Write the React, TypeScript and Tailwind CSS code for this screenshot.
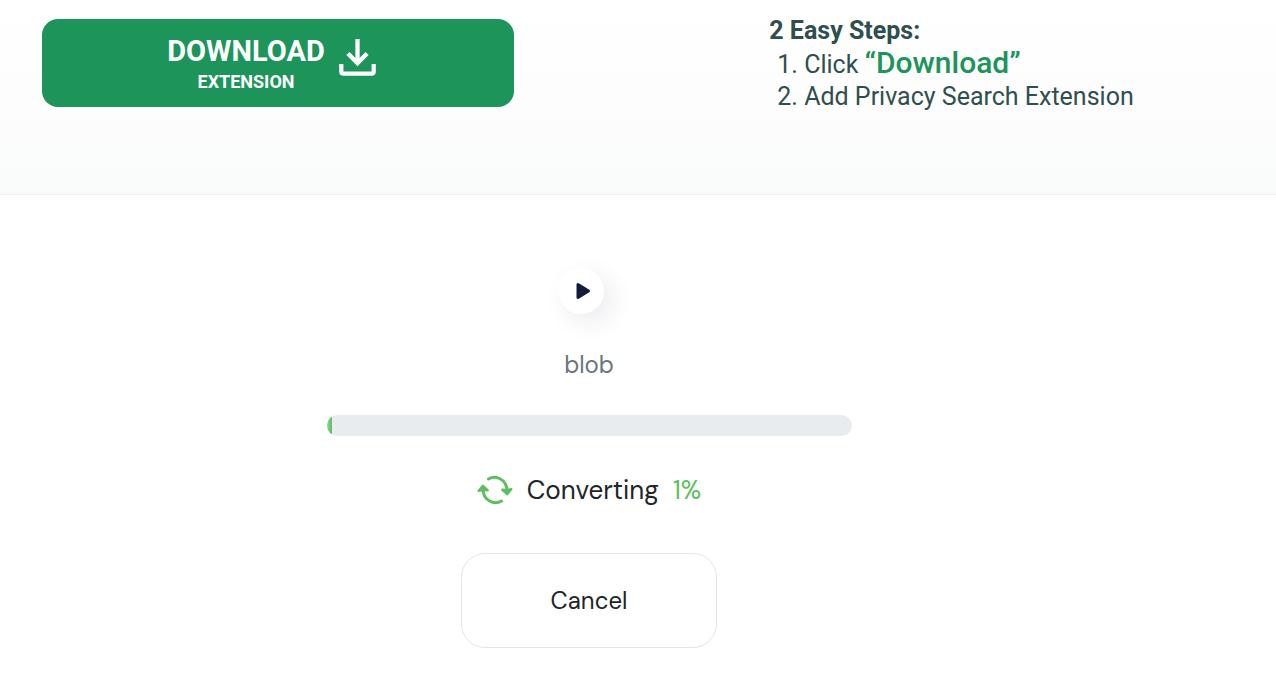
const DownloadIcon = () => (
  <svg className="h-10 w-10" viewBox="0 0 40 40" fill="none" aria-hidden="true">
    <path d="M20.500 2v23" stroke="white" strokeWidth="4.300" />
    <path d="M10.900 16.500l9.600 9.600 9.600-9.600" stroke="white" strokeWidth="4.300" />
    <path d="M4.300 27v7.500c0 1.500.7 2.200 2.200 2.200h28c1.500 0 2.200-.7 2.200-2.200V27" stroke="white" strokeWidth="4.200" />
  </svg>
);

const ConvertIcon = () => (
  <svg
    className="h-8 w-9"
    viewBox="0 0 36 32"
    fill="none"
    stroke="#5bbf5f"
    strokeWidth="3"
    strokeLinecap="round"
    strokeLinejoin="round"
    aria-hidden="true"
  >
    <path d="M11.500 5C18.500 .9 30 5 30 17" />
    <path d="M25.500 15.700l4.700 4.300 4-4.800-4.200 1z" fill="#5bbf5f" strokeWidth="2.600" />
    <path d="M24.500 27C17.500 31.100 6 27 6 15" />
    <path d="M10.500 16.300l-4.700-4.300-4 4.800 4.200-1z" fill="#5bbf5f" strokeWidth="2.600" />
  </svg>
);

const PlayIcon = () => (
  <svg className="h-5 w-4" viewBox="0 0 16 20" aria-hidden="true">
    <path
      d="M3 3.500v13L13.500 10z"
      fill="#141c3a"
      stroke="#141c3a"
      strokeWidth="3"
      strokeLinejoin="round"
    />
  </svg>
);

export default function App() {
  const progress = 1;

  return (
    <div className="min-h-screen bg-white font-['DM_Sans','Inter',sans-serif]">
      <header className="grid grid-cols-[57fr_43fr] border-b border-[#f0f1f5] bg-linear-to-b from-white via-[#fdfdfd] to-[#fafbfb] pt-[14px] pb-[81px] font-['Roboto',sans-serif]">
        <div className="pt-[5px] pl-[42px]">
          <button
            type="button"
            className="flex h-[88px] w-full max-w-[472px] items-center justify-center gap-3 rounded-2xl bg-[#1c945a] pr-3 text-white"
          >
            <span className="flex flex-col items-center pt-1 font-bold">
              <span className="text-[29px] leading-[34px]">DOWNLOAD</span>
              <span className="text-[18px] leading-7">EXTENSION</span>
            </span>
            <span className="pb-3">
              <DownloadIcon />
            </span>
          </button>
        </div>
        <section className="pl-[42px] text-[25px] leading-8 text-[#2f4f4f]">
          <h2 className="pt-px font-bold">2 Easy Steps:</h2>
          <ol className="list-inside list-decimal pl-2">
            <li>
              Click <strong className="text-[30px] font-medium text-[#1c945a]">“Download”</strong>
            </li>
            <li>Add Privacy Search Extension</li>
          </ol>
        </section>
      </header>

      <main className="flex flex-col items-center pt-[73px] pr-[98px] text-[#212529]">
        <div className="mr-4 flex size-[46px] items-center justify-center rounded-full bg-white pl-1 shadow-[8px_8px_24px_rgba(20,28,88,0.09)]">
          <PlayIcon />
        </div>
        <p className="mt-[33px] text-[24px] leading-9 text-[#6c757d]">blob</p>
        <div
          role="progressbar"
          aria-label="Conversion progress"
          aria-valuenow={progress}
          aria-valuemin={0}
          aria-valuemax={100}
          className="mt-8 h-[21px] w-full max-w-[525px] overflow-hidden rounded-full bg-[#e9ecef]"
        >
          <div className="h-full bg-linear-to-r from-[#8ed391] to-[#5bbf5f]" style={{ width: `${progress}%` }} />
        </div>
        <div className="mt-9 flex items-center gap-[14px] text-[26px] leading-9">
          <ConvertIcon />
          <span>Converting</span>
          <span className="text-[#5bbf5f]">{progress}%</span>
        </div>
        <button
          type="button"
          className="mt-[45px] h-[95px] w-full max-w-[256px] rounded-3xl border border-[#e4e5e7] bg-white text-[24px]"
        >
          Cancel
        </button>
      </main>
    </div>
  );
}
